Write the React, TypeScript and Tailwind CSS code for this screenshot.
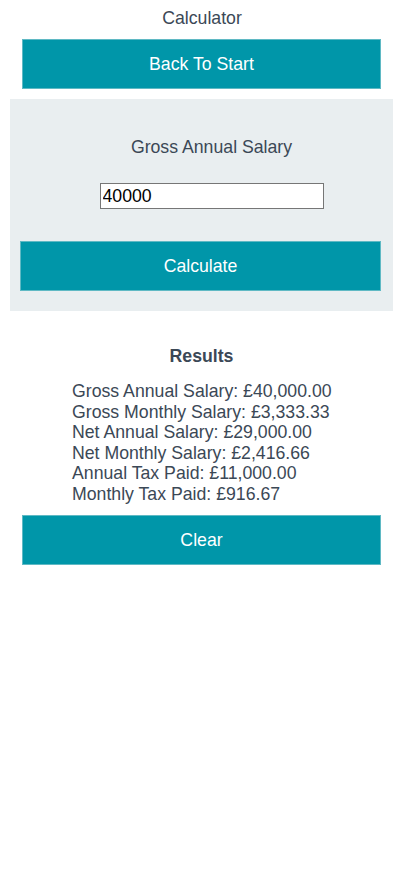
import React from 'react';

const results = [
  'Gross Annual Salary: £40,000.00',
  'Gross Monthly Salary: £3,333.33',
  'Net Annual Salary: £29,000.00',
  'Net Monthly Salary: £2,416.66',
  'Annual Tax Paid: £11,000.00',
  'Monthly Tax Paid: £916.67',
];

const btn =
  'w-full h-[50px] bg-[#0096a9] border border-[#5fb9c4] text-white text-[17.7px] flex items-center justify-center';

const App: React.FC = () => {
  return (
    <div className="w-[409px] min-h-[882px] bg-white text-[#3b4856] font-['Liberation_Sans',Arial,sans-serif]">
      <h1 className="text-[17.7px] text-center pt-[7px] pr-[5px] leading-[22px]">Calculator</h1>
      <div className="pl-[22px] pr-[28px] mt-[10px]">
        <button className={btn}>Back To Start</button>
      </div>

      <div className="mt-[10px] ml-[10px] mr-[16px] bg-[#e9eef0] pt-[37px] pb-[20px] px-[10px]">
        <p className="text-[17.7px] text-center pl-[20px] leading-[22px]">Gross Annual Salary</p>
        <div className="flex justify-center mt-[25px] pl-[20px]">
          <input
            defaultValue="40000"
            className="w-[224px] h-[26px] bg-white border border-[#767676] text-[17.7px] text-black px-[2px] outline-none"
          />
        </div>
        <div className="mt-[32px] pr-[2px]">
          <button className={btn}>Calculate</button>
        </div>
      </div>

      <h2 className="text-[17.7px] font-bold text-center pr-[6px] mt-[34px] leading-[22px]">Results</h2>
      <div className="pl-[72px] mt-[14px] text-[17.7px] leading-[20.5px]">
        {results.map((r) => (
          <div key={r}>{r}</div>
        ))}
      </div>
      <div className="pl-[22px] pr-[28px] mt-[11px]">
        <button className={btn}>Clear</button>
      </div>
    </div>
  );
};

export default App;
